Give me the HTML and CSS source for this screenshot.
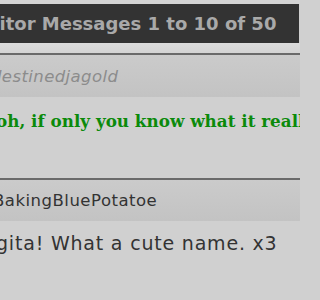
FILE: index.html
```html
<!DOCTYPE html>
<html>
<head>
<meta charset="utf-8">
<link rel="stylesheet" href="styles.css">
</head>
<body>
<div class="page">
  <div class="gap-top"></div>
  <div class="titlebar"><span class="title">Visitor Messages 1 to 10 of 50</span></div>
  <div class="gap-bottom"></div>
  <div class="message">
    <div class="msg-head"><span class="user italic">destinedjagold</span></div>
    <div class="msg-body first"><span class="green">oh, if only you know what it really means...</span></div>
  </div>
  <div class="message">
    <div class="msg-head"><span class="user">BakingBluePotatoe</span></div>
    <div class="msg-body second"><span class="plain">gita! What a cute name. x3</span></div>
  </div>
</div>
</body>
</html>
```

FILE: styles.css
```css
html, body {
  margin: 0;
  padding: 0;
  width: 300px;
  height: 300px;
  background: #d0d0d0;
  overflow: hidden;
}
.page {
  margin-left: -30px;
  width: 330px;
  white-space: nowrap;
  overflow: hidden;
}
.gap-top {
  height: 4px;
  background: #d4d4d4;
}
.titlebar {
  height: 39px;
  margin-right: 1px;
  background: #333333;
  color: #a9a9a9;
  font-family: "DejaVu Sans", Verdana, sans-serif;
  font-weight: bold;
  font-size: 18px;
  line-height: 39px;
  overflow: hidden;
}
.title {
  margin-left: -1px;
}
.gap-bottom {
  height: 10px;
  background: linear-gradient(#dcdcdc, #d4d4d4);
}
.message {
  border-top: 2px solid #6a6a6a;
}
.msg-head {
  height: 42px;
  background: linear-gradient(#cbcbcb, #c3c3c3);
  display: flex;
  align-items: center;
  padding-left: 28px;
  font-family: "DejaVu Sans", Verdana, sans-serif;
  font-size: 16.5px;
  overflow: hidden;
}
.message + .message .msg-head {
  height: 41px;
}
.user {
  color: #333333;
  margin-left: -5px;
  letter-spacing: 0.5px;
}
.user.italic {
  font-style: italic;
  color: #8c8c8c;
  margin-left: -7px;
  letter-spacing: 0.4px;
}
.msg-body {
  background: #d0d0d0;
  padding-left: 28px;
  overflow: hidden;
}
.msg-body.first {
  height: 81px;
  padding-top: 12px;
  box-sizing: border-box;
}
.msg-body.second {
  height: 90px;
  padding-top: 8px;
  box-sizing: border-box;
}
.green {
  margin-left: -2px;
  color: #0b8a0b;
  font-family: "DejaVu Serif", Georgia, serif;
  font-weight: bold;
  font-size: 16.8px;
  line-height: 24px;
}
.plain {
  margin-left: -2px;
  color: #333333;
  font-family: "DejaVu Sans", Verdana, sans-serif;
  font-size: 19px;
  letter-spacing: 0.8px;
  line-height: 28px;
}
```
